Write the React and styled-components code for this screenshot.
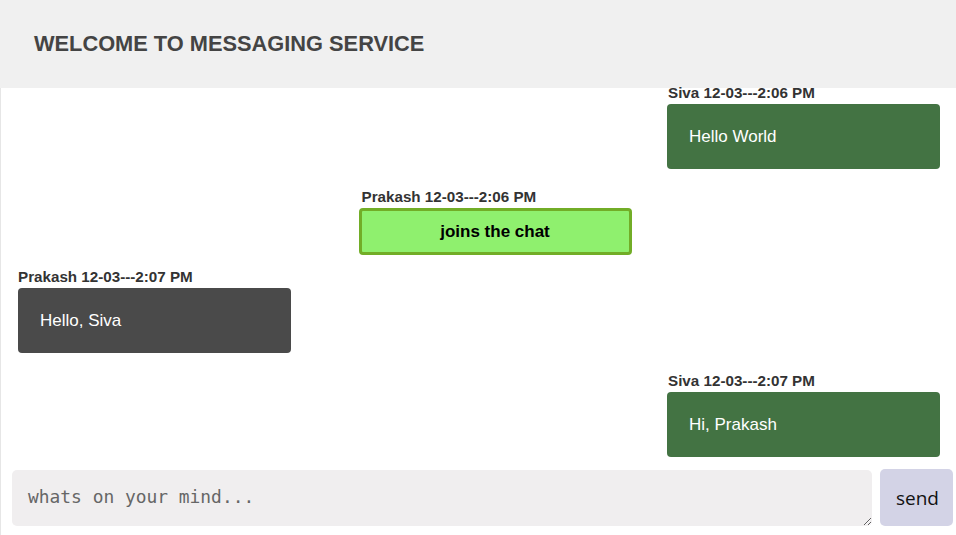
import React from 'react'
import styled, { createGlobalStyle } from 'styled-components'

const GlobalStyle = createGlobalStyle`
  html, body {
    margin: 0;
    padding: 0;
    background: #ffffff;
    font-family: "Liberation Sans", Arial, sans-serif;
  }
`

const messages = [
  { id: 1, user: 'Siva', time: '12-03---2:06 PM', text: 'Hello World', side: 'right' },
  { id: 2, user: 'Prakash', time: '12-03---2:06 PM', text: 'joins the chat', side: 'center' },
  { id: 3, user: 'Prakash', time: '12-03---2:07 PM', text: 'Hello, Siva', side: 'left' },
  { id: 4, user: 'Siva', time: '12-03---2:07 PM', text: 'Hi, Prakash', side: 'right' },
]

const App = () => {
  return (
    <>
      <GlobalStyle />
      <Page>
        <Header>WELCOME TO MESSAGING SERVICE</Header>
        <Body>
          <Messages>
            {messages.map(m => (
              <Message key={m.id} side={m.side}>
                <Meta side={m.side}>{m.user} {m.time}</Meta>
                <Bubble side={m.side}>{m.text}</Bubble>
              </Message>
            ))}
          </Messages>
          <Composer>
            <Input placeholder="whats on your mind..." />
            <SendButton>send</SendButton>
          </Composer>
        </Body>
      </Page>
    </>
  )
}

const Page = styled.div`
  height: 100vh;
  display: flex;
  flex-direction: column;
`

const Header = styled.div`
  height: 88px;
  flex-shrink: 0;
  display: flex;
  align-items: center;
  padding-left: 34px;
  background: #f0f0f0;
  color: #444444;
  font-size: 21.8px;
  font-weight: bold;
`

const Body = styled.div`
  flex: 1;
  min-height: 0;
  display: flex;
  flex-direction: column;
  border-left: 1px solid #e6e6e6;
`

const Messages = styled.div`
  flex: 1;
  min-height: 0;
  display: flex;
  flex-direction: column;
  justify-content: flex-end;
  padding: 0 16px 3px 17px;
`

const Message = styled.div`
  width: 273px;
  flex-shrink: 0;
  display: flex;
  flex-direction: column;
  align-self: ${p => (p.side === 'right' ? 'flex-end' : p.side === 'center' ? 'center' : 'flex-start')};
  margin-left: ${p => (p.side === 'center' ? '32px' : '0')};
  margin-bottom: ${p => (p.side === 'center' ? '14px' : '20px')};
  &:last-child {
    margin-bottom: 0;
  }
`

const Meta = styled.div`
  font-size: 15.2px;
  line-height: 16px;
  font-weight: bold;
  color: #333333;
  margin-bottom: 3px;
  padding-left: ${p => (p.side === 'center' ? '3px' : p.side === 'right' ? '1px' : '0')};
  white-space: nowrap;
`

const bubbleColors = {
  right: '#437343',
  left: '#4a4a4a',
  center: '#8ff06e',
}

const Bubble = styled.div`
  border-radius: 4px;
  font-size: 17px;
  line-height: 21px;
  background: ${p => bubbleColors[p.side]};
  color: ${p => (p.side === 'center' ? '#000000' : '#ffffff')};
  padding: ${p => (p.side === 'center' ? '10px' : '22px')};
  font-weight: ${p => (p.side === 'center' ? 'bold' : 'normal')};
  text-align: ${p => (p.side === 'center' ? 'center' : 'left')};
  border: ${p => (p.side === 'center' ? '3px solid #72ad27' : 'none')};
`

const Composer = styled.div`
  flex-shrink: 0;
  display: flex;
  align-items: center;
  gap: 8px;
  padding: 9px 3px 9px 11px;
`

const Input = styled.textarea`
  flex: 1;
  height: 56px;
  box-sizing: border-box;
  border: none;
  outline: none;
  border-radius: 5px;
  background: #f0eeef;
  padding: 16px 16px;
  font-family: "DejaVu Sans Mono", "Liberation Mono", monospace;
  font-size: 17.9px;
  line-height: 22px;
  color: #333;
  &::placeholder {
    color: #666666;
  }
`

const SendButton = styled.button`
  width: 73px;
  height: 57px;
  border: none;
  border-radius: 5px;
  background: #d3d3e6;
  color: #111111;
  font-family: "Open Sans", "Noto Sans", sans-serif;
  font-size: 19px;
  padding: 0 0 0 2px;
`

export default App
